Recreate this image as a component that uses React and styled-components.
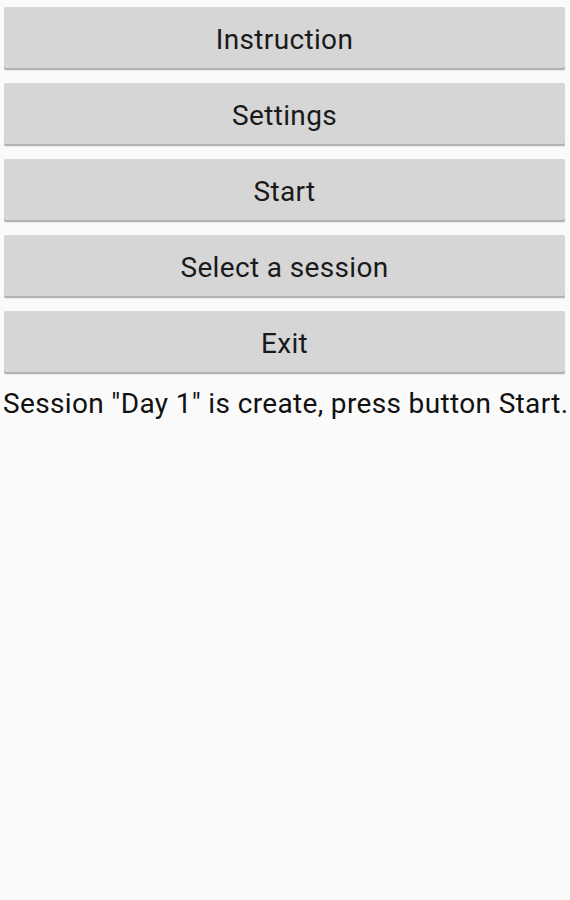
import React from 'react';
import styled, { createGlobalStyle } from 'styled-components';

const GlobalStyle = createGlobalStyle`
  html, body {
    margin: 0;
    padding: 0;
    background: #fafafa;
  }
  body {
    font-family: Roboto, "Noto Sans", sans-serif;
  }
`;

const Screen = styled.div`
  min-height: 900px;
  background: #fafafa;
  padding: 7px 5px 0 4px;
  box-sizing: border-box;
`;

const Menu = styled.div`
  display: flex;
  flex-direction: column;
  gap: 13px;
`;

const MenuButton = styled.button`
  display: block;
  width: 100%;
  height: 63px;
  margin: 0;
  padding: 2px 0 0;
  border: none;
  border-radius: 2px;
  background: #d6d6d6;
  box-shadow: inset 0 -2px 0 #b3b3b3, 0 1px 1px rgba(0, 0, 0, 0.08);
  font-family: Roboto, "Noto Sans", sans-serif;
  font-size: 28px;
  letter-spacing: 0.35px;
  color: #1a1a1a;
  cursor: pointer;
`;

const Status = styled.p`
  margin: 0;
  margin-left: -1px;
  padding-top: 13px;
  font-size: 28px;
  letter-spacing: 0.35px;
  line-height: 34px;
  color: #111;
  white-space: nowrap;
`;

const items = ['Instruction', 'Settings', 'Start', 'Select a session', 'Exit'];

export default function App() {
  return (
    <>
      <GlobalStyle />
      <Screen>
        <Menu>
          {items.map((label) => (
            <MenuButton key={label}>{label}</MenuButton>
          ))}
        </Menu>
        <Status>Session "Day 1" is create, press button Start.</Status>
      </Screen>
    </>
  );
}
